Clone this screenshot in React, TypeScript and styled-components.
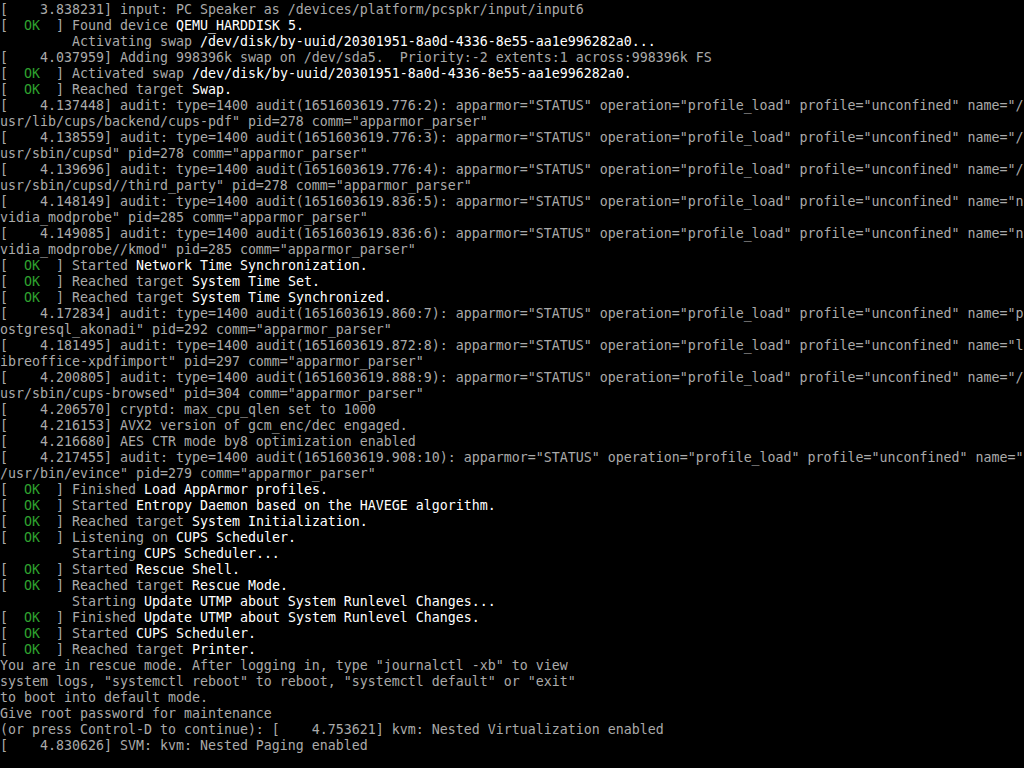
import React from "react";
import styled, { createGlobalStyle } from "styled-components";

const Global = createGlobalStyle`
  html, body {
    margin: 0;
    padding: 0;
    background: #000000;
  }
  #root {
    min-height: 768px;
    background: #000000;
  }
`;

const Screen = styled.div`
  box-sizing: border-box;
  width: 1024px;
  height: 768px;
  overflow: hidden;
  padding-top: 2px;
  background: #000000;
  color: #aaaaaa;
  font-family: "DejaVu Sans Mono", "Liberation Mono", monospace;
  font-size: 13.29px;
  line-height: 16px;
  display: flex;
  flex-direction: column;
`;

const Line = styled.div`
  height: 16px;
  flex: none;
  white-space: pre;
`;

const Ok = styled.span`
  color: #2fa32f;
`;

const Hi = styled.span`
  color: #ffffff;
`;

const AUD = (ts: string, id: string, first: string) =>
  `[    ${ts}] audit: type=1400 audit(1651603619.${id}): apparmor="STATUS" operation="profile_load" profile="unconfined" name="${first}`;

const lines: string[] = [
  "[    3.838231] input: PC Speaker as /devices/platform/pcspkr/input/input6",
  "[  OK  ] Found device |QEMU_HARDDISK 5.",
  "         Activating swap |/dev/disk/by-uuid/20301951-8a0d-4336-8e55-aa1e996282a0...",
  "[    4.037959] Adding 998396k swap on /dev/sda5.  Priority:-2 extents:1 across:998396k FS",
  "[  OK  ] Activated swap |/dev/disk/by-uuid/20301951-8a0d-4336-8e55-aa1e996282a0.",
  "[  OK  ] Reached target |Swap.",
  AUD("4.137448", "776:2", "/"),
  'usr/lib/cups/backend/cups-pdf" pid=278 comm="apparmor_parser"',
  AUD("4.138559", "776:3", "/"),
  'usr/sbin/cupsd" pid=278 comm="apparmor_parser"',
  AUD("4.139696", "776:4", "/"),
  'usr/sbin/cupsd//third_party" pid=278 comm="apparmor_parser"',
  AUD("4.148149", "836:5", "n"),
  'vidia_modprobe" pid=285 comm="apparmor_parser"',
  AUD("4.149085", "836:6", "n"),
  'vidia_modprobe//kmod" pid=285 comm="apparmor_parser"',
  "[  OK  ] Started |Network Time Synchronization.",
  "[  OK  ] Reached target |System Time Set.",
  "[  OK  ] Reached target |System Time Synchronized.",
  AUD("4.172834", "860:7", "p"),
  'ostgresql_akonadi" pid=292 comm="apparmor_parser"',
  AUD("4.181495", "872:8", "l"),
  'ibreoffice-xpdfimport" pid=297 comm="apparmor_parser"',
  AUD("4.200805", "888:9", "/"),
  'usr/sbin/cups-browsed" pid=304 comm="apparmor_parser"',
  "[    4.206570] cryptd: max_cpu_qlen set to 1000",
  "[    4.216153] AVX2 version of gcm_enc/dec engaged.",
  "[    4.216680] AES CTR mode by8 optimization enabled",
  AUD("4.217455", "908:10", ""),
  '/usr/bin/evince" pid=279 comm="apparmor_parser"',
  "[  OK  ] Finished |Load AppArmor profiles.",
  "[  OK  ] Started |Entropy Daemon based on the HAVEGE algorithm.",
  "[  OK  ] Reached target |System Initialization.",
  "[  OK  ] Listening on |CUPS Scheduler.",
  "         Starting |CUPS Scheduler...",
  "[  OK  ] Started |Rescue Shell.",
  "[  OK  ] Reached target |Rescue Mode.",
  "         Starting |Update UTMP about System Runlevel Changes...",
  "[  OK  ] Finished |Update UTMP about System Runlevel Changes.",
  "[  OK  ] Started |CUPS Scheduler.",
  "[  OK  ] Reached target |Printer.",
  'You are in rescue mode. After logging in, type "journalctl -xb" to view',
  'system logs, "systemctl reboot" to reboot, "systemctl default" or "exit"',
  "to boot into default mode.",
  "Give root password for maintenance",
  "(or press Control-D to continue): [    4.753621] kvm: Nested Virtualization enabled",
  "[    4.830626] SVM: kvm: Nested Paging enabled",
];

function ConsoleLine({ text }: { text: string }) {
  let rest = text;
  let ok = false;
  if (rest.startsWith("[  OK  ]")) {
    ok = true;
    rest = rest.slice(8);
  }
  const [plain, hi] = rest.split("|");
  return (
    <Line>
      {ok && (
        <>
          {"[  "}
          <Ok>OK</Ok>
          {"  ]"}
        </>
      )}
      {plain}
      {hi !== undefined && <Hi>{hi}</Hi>}
    </Line>
  );
}

export default function App() {
  return (
    <>
      <Global />
      <Screen>
        {lines.map((l, i) => (
          <ConsoleLine key={i} text={l} />
        ))}
      </Screen>
    </>
  );
}
